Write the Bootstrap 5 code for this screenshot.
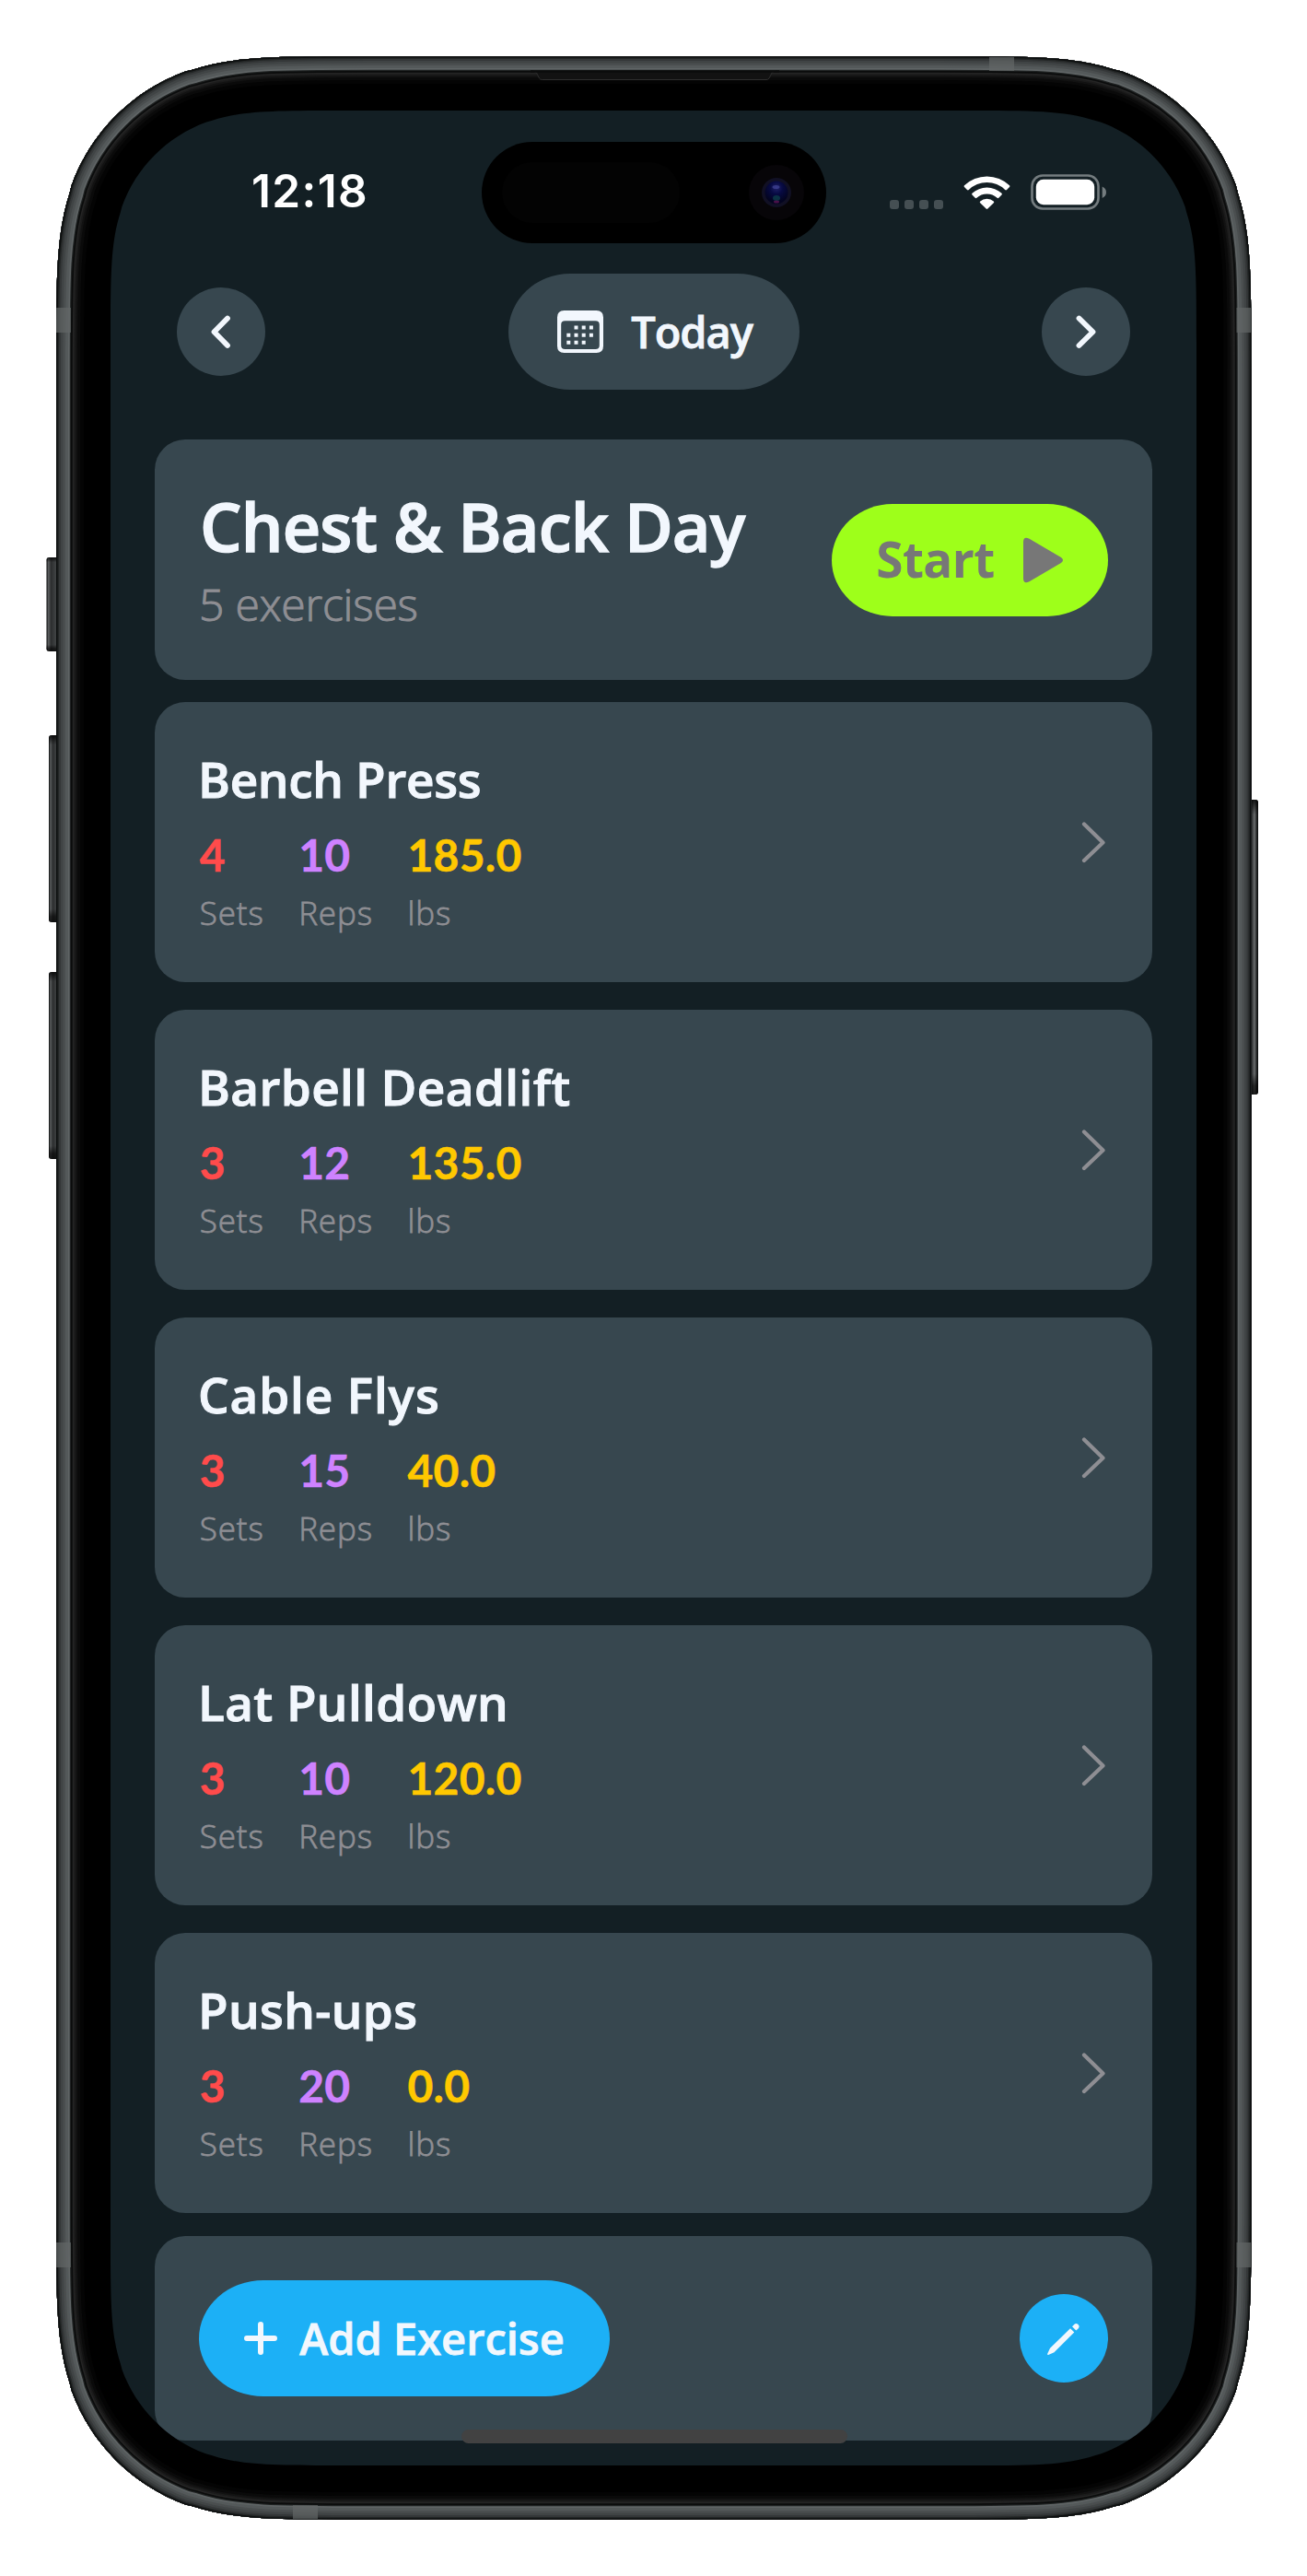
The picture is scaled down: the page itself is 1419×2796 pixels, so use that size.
<!DOCTYPE html>
<html lang="en">
<head>
<meta charset="utf-8">
<meta name="viewport" content="width=device-width, initial-scale=1">
<title>Workout</title>
<link rel="stylesheet" href="https://cdn.jsdelivr.net/npm/bootstrap@5.3.0/dist/css/bootstrap.min.css">
<style>
  :root { --ink: #f2f7fd; --panel: #37474f; --app: #131f24; --muted: #8e8e93; }
  body { width: 1419px; background: #fff; font-family: "Open Sans", "Noto Sans", sans-serif; color: var(--ink); }
  .phone { width: 1419px; height: 2796px; padding: 120px; }
  .phone-frame { top: 0; left: 0; }
  .app-screen {
    width: 1179px; height: 2556px; background: var(--app);
    clip-path: path("M252.2 0H926.8c72.6 0 108.9 0 141.7 10.8l6.3 1.6c42.7 15.5 76.3 49.1 91.8 91.8l1.6 6.3c10.8 32.8 10.8 69.1 10.8 141.7V2303.8c0 72.6 0 108.9-10.8 141.7l-1.6 6.3c-15.5 42.7-49.1 76.3-91.8 91.8l-6.3 1.6c-32.8 10.8-69.1 10.8-141.7 10.8H252.2c-72.6 0-108.9 0-141.7-10.8l-6.3-1.6c-42.7-15.5-76.3-49.1-91.8-91.8l-1.6-6.3c-10.8-32.8-10.8-69.1-10.8-141.7V252.2c0-72.6 0-108.9 10.8-141.7l1.6-6.3c15.5-42.7 49.1-76.3 91.8-91.8l6.3-1.6c32.8-10.8 69.1-10.8 141.7-10.8z");
  }
  .status-row { height: 177px; padding: 0 98px 0 153px; }
  .clock { font: 600 49.5px/60px Inter, sans-serif; letter-spacing: 1.4px; color: #fff; margin-bottom: 3px; }
  .island { top: 34px; left: 402.5px; width: 374px; height: 110px; border-radius: 55px; background: #000; }
  .island-sensor { left: 22px; top: 22px; width: 193px; height: 66px; border-radius: 33px; background: #030303; }
  .island-camera { left: 290px; top: 25px; }
  .date-row { height: 126px; padding: 0 72px; margin-bottom: 54px; }
  .round-btn { width: 96px; height: 96px; background: var(--panel); }
  .date-pill { width: 316px; height: 126px; border-radius: 67px / 63px; background: var(--panel); font-size: 47px; font-weight: 600; line-height: 60px; letter-spacing: -1.1px; gap: 30px; }
  .date-pill svg { margin-left: 3px; }
  .date-pill span, .add-btn span { -webkit-text-stroke: .8px currentColor; }
  .panel { margin: 0 48px; background: var(--panel); border-radius: 33px; }
  .plan { height: 261px; padding: 0 48px; margin-bottom: 24px; }
  .plan h1 { font-size: 72px; line-height: 80px; font-weight: 600; letter-spacing: -.85px; margin: 1px 0 15px 1px; -webkit-text-stroke: 1.4px currentColor; }
  .plan-count { font-size: 48px; line-height: 60px; font-weight: 300; color: var(--muted); margin: 0; letter-spacing: -.2px; -webkit-text-stroke: 1px currentColor; }
  .start-btn { width: 300px; height: 122px; border-radius: 66px / 61px; background: #9eff1a; color: #777; font-size: 53px; font-weight: 700; letter-spacing: -.6px; gap: 30px; line-height: 60px; }
  .start-btn span { margin-bottom: 2px; }
  .exercise-list { gap: 30px; margin-bottom: 25px; }
  .exercise { height: 304px; padding: 54px 51px 0 48px; }
  .exercise h2 { font-size: 53px; line-height: 60px; font-weight: 600; margin: 0 0 24px -1px; letter-spacing: .4px; -webkit-text-stroke: 1px currentColor; }
  .exercise h2.fit-tight { letter-spacing: -.3px; }
  .exercise h2.fit-loose { letter-spacing: .9px; }
  .stats { gap: 37.5px; padding-left: .7px; }
  .stat-value { font: 700 48px/56px Lato, sans-serif; margin-bottom: 13px; letter-spacing: .3px; -webkit-text-stroke: .5px currentColor; }
  .stat-label { font-size: 35px; line-height: 44px; font-weight: 300; letter-spacing: .9px; color: var(--muted); -webkit-text-stroke: .8px currentColor; }
  .sets { color: #ff4b4b; } .reps { color: #ce82ff; } .load { color: #ffc800; }
  .chev { margin-bottom: 54px; }
  .footer-panel { height: 222px; padding: 0 48px; }
  .add-btn { width: 446px; height: 126px; border-radius: 70px / 63px; background: #1cb0f6; font-size: 47px; font-weight: 600; line-height: 60px; gap: 24px; }
  .edit-btn { background: #1cb0f6; }
  .home-bar { left: 380.5px; top: 2517px; width: 419px; height: 15px; border-radius: 7.5px; background: #424242; }
</style>
<script src="https://cdn.jsdelivr.net/npm/bootstrap@5.3.0/dist/js/bootstrap.bundle.min.js"></script>
</head>
<body>
<main class="phone position-relative overflow-hidden">
  <svg class="phone-frame position-absolute" width="1419" height="2796" viewBox="0 0 1419 2796" aria-hidden="true">
    <defs>
      <path id="shell" d="M400.4 61H1019.1c97.8 0 146.6 0 190.7 14.5l8.5 2.1c57.4 20.9 102.7 66.2 123.6 123.6l2.1 8.5c14.5 44.1 14.5 92.9 14.5 190.7V2395.6c0 97.8 0 146.6-14.5 190.7l-2.1 8.5c-20.9 57.4-66.2 102.7-123.6 123.6l-8.5 2.1c-44.1 14.5-92.9 14.5-190.7 14.5H400.4c-97.8 0-146.6 0-190.7-14.5l-8.5-2.1c-57.4-20.9-102.7-66.2-123.6-123.6l-2.1-8.5c-14.5-44.1-14.5-92.9-14.5-190.7V400.4c0-97.8 0-146.6 14.5-190.7l2.1-8.5c20.9-57.4 66.2-102.7 123.6-123.6l8.5-2.1c44.1-14.5 92.9-14.5 190.7-14.5z"/>
      <clipPath id="shellClip"><use href="#shell"/></clipPath>
      <linearGradient id="keyL" x1="0" x2="1"><stop offset="0" stop-color="#050606"/><stop offset=".15" stop-color="#5c5f60"/><stop offset=".35" stop-color="#2c2e2f"/><stop offset=".8" stop-color="#444748"/><stop offset="1" stop-color="#151616"/></linearGradient>
      <linearGradient id="keyR" x1="1" x2="0"><stop offset="0" stop-color="#050606"/><stop offset=".2" stop-color="#303233"/><stop offset=".35" stop-color="#6b6e6f"/><stop offset=".6" stop-color="#343637"/><stop offset="1" stop-color="#151616"/></linearGradient>
      <linearGradient id="keyEnds" x2="0" y2="1"><stop offset="0" stop-color="#000" stop-opacity=".8"/><stop offset=".05" stop-color="#000" stop-opacity="0"/><stop offset=".93" stop-color="#000" stop-opacity="0"/><stop offset=".97" stop-color="#000" stop-opacity=".6"/><stop offset="1" stop-color="#000" stop-opacity=".7"/></linearGradient>
    </defs>
    <!-- side keys -->
    <g fill="url(#keyL)">
      <rect x="50.5" y="605" width="14" height="102" rx="3"/>
      <rect x="53" y="798" width="12" height="203" rx="3"/>
      <rect x="53" y="1055" width="12" height="203" rx="3"/>
    </g>
    <rect x="1355" y="868" width="11" height="320" rx="3" fill="url(#keyR)"/>
    <g fill="url(#keyEnds)">
      <rect x="50.5" y="605" width="14" height="102" rx="3"/>
      <rect x="53" y="798" width="12" height="203" rx="3"/>
      <rect x="53" y="1055" width="12" height="203" rx="3"/>
      <rect x="1355" y="868" width="11" height="320" rx="3"/>
    </g>
    <!-- titanium band built from nested inner strokes -->
    <g clip-path="url(#shellClip)" fill="none">
      <use href="#shell" fill="#000"/>
      <use href="#shell" stroke="#040404" stroke-width="60"/>
      <use href="#shell" stroke="#0a0a0a" stroke-width="52"/>
      <use href="#shell" stroke="#121212" stroke-width="46"/>
      <use href="#shell" stroke="#1b1b1b" stroke-width="42"/>
      <use href="#shell" stroke="#242424" stroke-width="38.5"/>
      <use href="#shell" stroke="#0b0c0c" stroke-width="35.5"/>
      <use href="#shell" stroke="#1f2222" stroke-width="32"/>
      <use href="#shell" stroke="#5f6465" stroke-width="29.5"/>
      <use href="#shell" stroke="#54595a" stroke-width="26"/>
      <use href="#shell" stroke="#4a4e4f" stroke-width="20"/>
      <use href="#shell" stroke="#404445" stroke-width="15"/>
      <use href="#shell" stroke="#343738" stroke-width="10"/>
      <use href="#shell" stroke="#232626" stroke-width="6"/>
      <use href="#shell" stroke="#0d0f0f" stroke-width="3"/>
      <!-- antenna lines -->
      <g fill="#636767" fill-opacity=".7">
        <path d="M61 334h16v27H61zM1342.500 334h16v27h-16zM61 2434h16v27H61zM1342.500 2434h16v27h-16z"/>
        <path d="M1074 62h27v15h-27zM318 2719h27v15h-27z"/>
      </g>
      <!-- earpiece slot -->
      <path d="M579 77l3.500 2 3 6q1 1.500 3 1.500H832q2 0 3-1.500l3-6 3.500-2z" fill="#121212" stroke="#2e2e2e" stroke-width="1"/>
      <path d="M576 77.500H846" stroke="#0b0c0c" stroke-width="2.500"/>
    </g>
  </svg>

  <div class="app-screen position-relative d-flex flex-column">
    <div class="status-row d-flex align-items-center justify-content-between flex-shrink-0">
      <span class="clock">12:18</span>
      <svg width="236" height="40" viewBox="965 188 236 40" aria-label="Status">
        <g fill="#454f53"><rect x="966" y="216" width="10" height="10" rx="3"/><rect x="982" y="216" width="10" height="10" rx="3"/><rect x="998" y="216" width="10" height="10" rx="3"/><rect x="1014" y="216" width="10" height="10" rx="3"/></g>
        <g fill="#fff">
          <path d="M1047 200.200a35.500 35.500 0 0 1 49 0q.8 .9 0 1.800l-3 3q-.9 .8-1.800 0a28.300 28.300 0 0 0-39.400 0q-.9 .8-1.800 0l-3-3q-.8-.9 0-1.800z"/>
          <path d="M1055.500 208.800a23.500 23.500 0 0 1 32 0q.9 .9 0 1.800l-3.200 3.200q-.8 .8-1.700 0a16.400 16.400 0 0 0-22.200 0q-.9 .8-1.700 0l-3.200-3.200q-.9-.9 0-1.800z"/>
          <path d="M1064.200 217.400a11.200 11.200 0 0 1 14.600 0q1 .9 0 1.900l-6.400 6.300q-.9 .8-1.800 0l-6.400-6.300q-1-1 0-1.900z"/>
          <rect x="1124.800" y="193.800" width="63.400" height="27.400" rx="8"/>
        </g>
        <rect x="1120.500" y="189.500" width="72" height="36" rx="11.500" fill="none" stroke="#747c7f" stroke-width="2.600"/>
        <path d="M1196.700 201.500q4.300 2 4.300 6.200t-4.300 6.200z" fill="#747c7f"/>
      </svg>
    </div>

    <div class="island position-absolute">
      <div class="island-sensor position-absolute"></div>
      <svg class="island-camera position-absolute" width="60" height="60" viewBox="0 0 60 60" aria-hidden="true">
        <defs>
          <radialGradient id="lens" cx=".5" cy=".3" r=".6"><stop offset="0" stop-color="#202168"/><stop offset=".45" stop-color="#070a42"/><stop offset="1" stop-color="#030420"/></radialGradient>
        </defs>
        <circle cx="30" cy="30" r="30" fill="#070508"/>
        <circle cx="30" cy="30" r="16" fill="#111024"/>
        <circle cx="30" cy="30" r="12.500" fill="url(#lens)"/>
        <ellipse cx="29.500" cy="24" rx="4" ry="2" fill="#4a4da0" opacity=".6"/>
        <ellipse cx="30" cy="36" rx="4" ry="3" fill="#0d3d4a" opacity=".8"/>
        <ellipse cx="30" cy="40" rx="3" ry="1.500" fill="#4a1048"/>
      </svg>
    </div>

    <div class="date-row d-flex align-items-center justify-content-between flex-shrink-0">
      <button class="round-btn btn rounded-circle border-0 p-0 d-flex align-items-center justify-content-center" aria-label="Previous day">
        <svg width="96" height="96" viewBox="0 0 96 96" fill="none" stroke="#f2f7fd" stroke-width="5.800" stroke-linecap="round" stroke-linejoin="round"><path d="M55 33.500L40.500 48.300L55 63"/></svg>
      </button>
      <button class="date-pill btn border-0 p-0 text-reset d-flex align-items-center justify-content-center">
        <svg width="50" height="46" viewBox="0 0 50 46" fill="#f2f7fd"><path fill-rule="evenodd" d="M7.500 0h35q7.500 0 7.500 7.500v31q0 7.500-7.500 7.500h-35Q0 46 0 38.500v-31Q0 0 7.500 0zM8.500 11.300Q4.200 11.300 4.200 15.500V38q0 4 4.300 4h33q4.300 0 4.300-4V15.500q0-4.200-4.300-4.200z"/>
          <path d="M18.500 16.500h4v4h-4zm8.200 0h4v4h-4zm8.200 0h4v4h-4zM10.300 24.700h4v4h-4zm8.200 0h4v4h-4zm8.200 0h4v4h-4zm8.200 0h4v4h-4zM10.300 32.700h4v4h-4zm8.200 0h4v4h-4zm8.200 0h4v4h-4z"/></svg>
        <span>Today</span>
      </button>
      <button class="round-btn btn rounded-circle border-0 p-0 d-flex align-items-center justify-content-center" aria-label="Next day">
        <svg width="96" height="96" viewBox="0 0 96 96" fill="none" stroke="#f2f7fd" stroke-width="5.800" stroke-linecap="round" stroke-linejoin="round"><path d="M40.500 33.500L55.500 48.300L40.500 63"/></svg>
      </button>
    </div>

    <header class="panel plan d-flex align-items-center justify-content-between flex-shrink-0">
      <div>
        <h1>Chest &amp; Back Day</h1>
        <p class="plan-count">5 exercises</p>
      </div>
      <button class="start-btn btn border-0 p-0 d-flex align-items-center justify-content-center">
        <span>Start</span>
        <svg width="45" height="50" viewBox="0 0 45 50" fill="#777"><path d="M1 5.500Q1-1.500 7.500 1.800L42 22q4 3 0 6L7.500 48.200Q1 51.500 1 44.500z"/></svg>
      </button>
    </header>

    <div class="exercise-list d-flex flex-column flex-shrink-0">
      <section class="panel exercise d-flex align-items-center justify-content-between">
        <div class="align-self-start"><h2 class="fit-tight">Bench Press</h2>
          <div class="stats d-flex">
            <div><div class="stat-value sets">4</div><div class="stat-label">Sets</div></div>
            <div><div class="stat-value reps">10</div><div class="stat-label">Reps</div></div>
            <div><div class="stat-value load">185.0</div><div class="stat-label">lbs</div></div>
          </div></div>
        <svg class="chev" width="26" height="46" viewBox="0 0 26 46" fill="none" stroke="#8e8e93" stroke-width="4.200" stroke-linecap="round" stroke-linejoin="round"><path d="M3 3.500L23.500 23.500L3 43"/></svg>
      </section>
      <section class="panel exercise d-flex align-items-center justify-content-between">
        <div class="align-self-start"><h2>Barbell Deadlift</h2>
          <div class="stats d-flex">
            <div><div class="stat-value sets">3</div><div class="stat-label">Sets</div></div>
            <div><div class="stat-value reps">12</div><div class="stat-label">Reps</div></div>
            <div><div class="stat-value load">135.0</div><div class="stat-label">lbs</div></div>
          </div></div>
        <svg class="chev" width="26" height="46" viewBox="0 0 26 46" fill="none" stroke="#8e8e93" stroke-width="4.200" stroke-linecap="round" stroke-linejoin="round"><path d="M3 3.500L23.500 23.500L3 43"/></svg>
      </section>
      <section class="panel exercise d-flex align-items-center justify-content-between">
        <div class="align-self-start"><h2 class="fit-loose">Cable Flys</h2>
          <div class="stats d-flex">
            <div><div class="stat-value sets">3</div><div class="stat-label">Sets</div></div>
            <div><div class="stat-value reps">15</div><div class="stat-label">Reps</div></div>
            <div><div class="stat-value load">40.0</div><div class="stat-label">lbs</div></div>
          </div></div>
        <svg class="chev" width="26" height="46" viewBox="0 0 26 46" fill="none" stroke="#8e8e93" stroke-width="4.200" stroke-linecap="round" stroke-linejoin="round"><path d="M3 3.500L23.500 23.500L3 43"/></svg>
      </section>
      <section class="panel exercise d-flex align-items-center justify-content-between">
        <div class="align-self-start"><h2>Lat Pulldown</h2>
          <div class="stats d-flex">
            <div><div class="stat-value sets">3</div><div class="stat-label">Sets</div></div>
            <div><div class="stat-value reps">10</div><div class="stat-label">Reps</div></div>
            <div><div class="stat-value load">120.0</div><div class="stat-label">lbs</div></div>
          </div></div>
        <svg class="chev" width="26" height="46" viewBox="0 0 26 46" fill="none" stroke="#8e8e93" stroke-width="4.200" stroke-linecap="round" stroke-linejoin="round"><path d="M3 3.500L23.500 23.500L3 43"/></svg>
      </section>
      <section class="panel exercise d-flex align-items-center justify-content-between">
        <div class="align-self-start"><h2>Push-ups</h2>
          <div class="stats d-flex">
            <div><div class="stat-value sets">3</div><div class="stat-label">Sets</div></div>
            <div><div class="stat-value reps">20</div><div class="stat-label">Reps</div></div>
            <div><div class="stat-value load">0.0</div><div class="stat-label">lbs</div></div>
          </div></div>
        <svg class="chev" width="26" height="46" viewBox="0 0 26 46" fill="none" stroke="#8e8e93" stroke-width="4.200" stroke-linecap="round" stroke-linejoin="round"><path d="M3 3.500L23.500 23.500L3 43"/></svg>
      </section>
    </div>

    <footer class="panel footer-panel d-flex align-items-center justify-content-between flex-shrink-0">
      <button class="add-btn btn border-0 p-0 text-reset d-flex align-items-center justify-content-center">
        <svg width="36" height="36" viewBox="0 0 36 36" stroke="#f2f7fd" stroke-width="6" stroke-linecap="round"><path d="M18 3v30M3 18h30"/></svg>
        <span>Add Exercise</span>
      </button>
      <button class="round-btn edit-btn btn rounded-circle border-0 p-0 d-flex align-items-center justify-content-center" aria-label="Edit">
        <svg width="96" height="96" viewBox="0 0 96 96" fill="#f2f7fd"><path d="M55 37.200L59.300 41.500L37.500 63.200L31.200 65.900Q29.800 66.200 30.200 64.800L33 58.800zM57 35.200L59.200 33Q61.200 31 63.300 32.800Q65.800 35 63.600 37.400L61.300 39.500z"/></svg>
      </button>
    </footer>

    <div class="home-bar position-absolute"></div>
  </div>
</main>
</body>
</html>
